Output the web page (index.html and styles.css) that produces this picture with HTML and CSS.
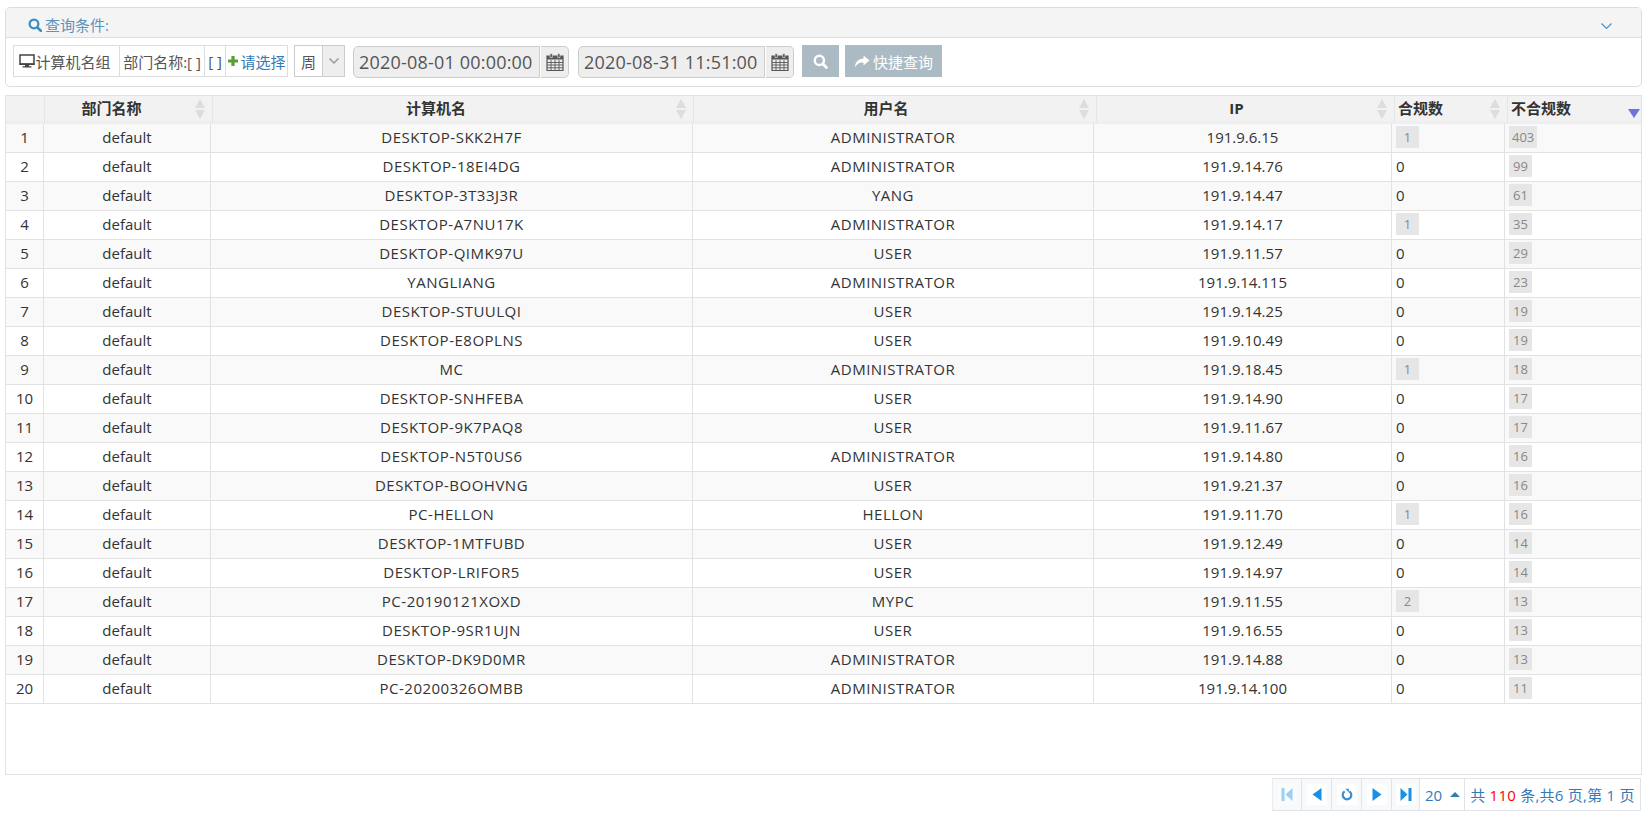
FILE: index.html
```html
<!DOCTYPE html>
<html lang="zh-CN">
<head>
<meta charset="utf-8">
<title>查询</title>
<link rel="stylesheet" href="styles.css">
</head>
<body>
<section class="panel">
  <header class="panel-head">
    <span class="panel-title">
      <svg class="i-search" viewBox="0 0 16 16"><circle cx="6.800" cy="6.800" r="5" fill="none" stroke="currentColor" stroke-width="2.600"/><path d="M10.400 10.400 14.600 14.600" stroke="currentColor" stroke-width="3" stroke-linecap="round"/></svg>查询条件:
    </span>
    <svg class="i-chev" viewBox="0 0 12 8"><path d="M1 1.500 6 6.500 11 1.500" fill="none" stroke="currentColor" stroke-width="1.200"/></svg>
  </header>
  <div class="toolbar">
    <div class="btn-group">
      <span class="seg seg-a"><svg class="i-monitor" viewBox="0 0 16 14"><path d="M1 1h14v9H1z" fill="none" stroke="#444" stroke-width="1.500"/><path d="M.5 9.500h15V11H.5zM6 11h4v1.200H6zM3.500 12.200h9V13.500h-9z" fill="#444"/></svg>计算机名组</span>
      <span class="seg seg-b">部门名称:[ ]</span>
      <span class="seg seg-c">[ ]</span>
      <span class="seg seg-d"><svg class="i-plus" viewBox="0 0 12 12"><path d="M4.400 1h3.200v3.400H11v3.200H7.600V11H4.400V7.600H1V4.400h3.400z" fill="#5a9e34"/></svg>请选择</span>
    </div>
    <div class="select">
      <span class="select-val">周</span>
      <span class="select-arrow"><svg viewBox="0 0 12 8"><path d="M1.500 1.500 6 6 10.500 1.500" fill="none" stroke="#999" stroke-width="1.500"/></svg></span>
    </div>
    <div class="date">
      <span class="date-input">2020-08-01 00:00:00</span>
      <span class="date-addon"><svg class="i-cal" viewBox="0 0 18 18"><use href="#cal"/></svg></span>
    </div>
    <div class="date">
      <span class="date-input">2020-08-31 11:51:00</span>
      <span class="date-addon"><svg class="i-cal" viewBox="0 0 18 18"><use href="#cal"/></svg></span>
    </div>
    <button class="btn btn-search"><svg class="i-search-w" viewBox="0 0 16 16"><circle cx="6.800" cy="6.800" r="4.900" fill="none" stroke="#fff" stroke-width="2.600"/><path d="M10.400 10.400 14.300 14.300" stroke="#fff" stroke-width="3" stroke-linecap="round"/></svg></button>
    <button class="btn btn-quick"><svg class="i-share" viewBox="0 0 16 13"><path d="M9.500 .5 15.500 5.500 9.500 10.500V7.500C5.500 7.500 3 8.500 1 12.500 1 7 4.500 3.700 9.500 3.500z" fill="#fff"/></svg>快捷查询</button>
  </div>
</section>

<svg class="defs" aria-hidden="true"><defs><g id="cal"><path d="M1 3h16v14.500H1z" fill="none" stroke="#555" stroke-width="1.200"/><path d="M1 3h16v3.500H1z" fill="#555"/><path d="M4 .8h2.400v3.700H4zM11.600 .8H14v3.700h-2.400z" fill="#555" stroke="#eee" stroke-width=".6"/><path d="M1 9.500h16M1 12h16M1 14.800h16M5 7v10M9 7v10M13 7v10" stroke="#555" stroke-width=".9"/></g></defs></svg>

<section class="grid">
  <table class="thead">
    <colgroup><col class="h0"><col class="h1"><col class="h2"><col class="h3"><col class="h4"><col class="h5"><col class="h6"></colgroup>
    <tr>
      <th></th>
      <th class="sortable pad-l"><span>部门名称</span><i class="sort"></i></th>
      <th class="sortable pad-l"><span>计算机名</span><i class="sort"></i></th>
      <th class="sortable pad-m"><span>用户名</span><i class="sort"></i></th>
      <th class="sortable pad-m"><span>IP</span><i class="sort"></i></th>
      <th class="sortable left"><span>合规数</span><i class="sort"></i></th>
      <th class="sortable left"><span>不合规数</span><i class="sort-down"></i></th>
    </tr>
  </table>
  <table class="tbody">
    <colgroup><col class="b0"><col class="b1"><col class="b2"><col class="b3"><col class="b4"><col class="b5"><col class="b6"></colgroup>
    <tr><td>1</td><td>default</td><td>DESKTOP-SKK2H7F</td><td>ADMINISTRATOR</td><td>191.9.6.15</td><td class="left"><b class="badge">1</b></td><td class="left"><b class="badge">403</b></td></tr>
    <tr><td>2</td><td>default</td><td>DESKTOP-18EI4DG</td><td>ADMINISTRATOR</td><td>191.9.14.76</td><td class="left">0</td><td class="left"><b class="badge">99</b></td></tr>
    <tr><td>3</td><td>default</td><td>DESKTOP-3T33J3R</td><td>YANG</td><td>191.9.14.47</td><td class="left">0</td><td class="left"><b class="badge">61</b></td></tr>
    <tr><td>4</td><td>default</td><td>DESKTOP-A7NU17K</td><td>ADMINISTRATOR</td><td>191.9.14.17</td><td class="left"><b class="badge">1</b></td><td class="left"><b class="badge">35</b></td></tr>
    <tr><td>5</td><td>default</td><td>DESKTOP-QIMK97U</td><td>USER</td><td>191.9.11.57</td><td class="left">0</td><td class="left"><b class="badge">29</b></td></tr>
    <tr><td>6</td><td>default</td><td>YANGLIANG</td><td>ADMINISTRATOR</td><td>191.9.14.115</td><td class="left">0</td><td class="left"><b class="badge">23</b></td></tr>
    <tr><td>7</td><td>default</td><td>DESKTOP-STUULQI</td><td>USER</td><td>191.9.14.25</td><td class="left">0</td><td class="left"><b class="badge">19</b></td></tr>
    <tr><td>8</td><td>default</td><td>DESKTOP-E8OPLNS</td><td>USER</td><td>191.9.10.49</td><td class="left">0</td><td class="left"><b class="badge">19</b></td></tr>
    <tr><td>9</td><td>default</td><td>MC</td><td>ADMINISTRATOR</td><td>191.9.18.45</td><td class="left"><b class="badge">1</b></td><td class="left"><b class="badge">18</b></td></tr>
    <tr><td>10</td><td>default</td><td>DESKTOP-SNHFEBA</td><td>USER</td><td>191.9.14.90</td><td class="left">0</td><td class="left"><b class="badge">17</b></td></tr>
    <tr><td>11</td><td>default</td><td>DESKTOP-9K7PAQ8</td><td>USER</td><td>191.9.11.67</td><td class="left">0</td><td class="left"><b class="badge">17</b></td></tr>
    <tr><td>12</td><td>default</td><td>DESKTOP-N5T0US6</td><td>ADMINISTRATOR</td><td>191.9.14.80</td><td class="left">0</td><td class="left"><b class="badge">16</b></td></tr>
    <tr><td>13</td><td>default</td><td>DESKTOP-BOOHVNG</td><td>USER</td><td>191.9.21.37</td><td class="left">0</td><td class="left"><b class="badge">16</b></td></tr>
    <tr><td>14</td><td>default</td><td>PC-HELLON</td><td>HELLON</td><td>191.9.11.70</td><td class="left"><b class="badge">1</b></td><td class="left"><b class="badge">16</b></td></tr>
    <tr><td>15</td><td>default</td><td>DESKTOP-1MTFUBD</td><td>USER</td><td>191.9.12.49</td><td class="left">0</td><td class="left"><b class="badge">14</b></td></tr>
    <tr><td>16</td><td>default</td><td>DESKTOP-LRIFOR5</td><td>USER</td><td>191.9.14.97</td><td class="left">0</td><td class="left"><b class="badge">14</b></td></tr>
    <tr><td>17</td><td>default</td><td>PC-20190121XOXD</td><td>MYPC</td><td>191.9.11.55</td><td class="left"><b class="badge">2</b></td><td class="left"><b class="badge">13</b></td></tr>
    <tr><td>18</td><td>default</td><td>DESKTOP-9SR1UJN</td><td>USER</td><td>191.9.16.55</td><td class="left">0</td><td class="left"><b class="badge">13</b></td></tr>
    <tr><td>19</td><td>default</td><td>DESKTOP-DK9D0MR</td><td>ADMINISTRATOR</td><td>191.9.14.88</td><td class="left">0</td><td class="left"><b class="badge">13</b></td></tr>
    <tr><td>20</td><td>default</td><td>PC-20200326OMBB</td><td>ADMINISTRATOR</td><td>191.9.14.100</td><td class="left">0</td><td class="left"><b class="badge">11</b></td></tr>
  </table>
</section>

<nav class="pager">
  <span class="pg pg-btn disabled"><svg viewBox="0 0 12 14"><path d="M.5 .5h3v13h-3zM11.500 .5v13L4.500 7z" fill="#1b8fe6"/></svg></span>
  <span class="pg pg-btn"><svg viewBox="0 0 12 14"><path d="M10.500 .5v13L1.500 7z" fill="#1b8fe6"/></svg></span>
  <span class="pg pg-btn"><svg viewBox="0 0 14 14"><path d="M4.300 3.400A5 5 0 1 0 9.700 3.400" fill="none" stroke="#3d8fd1" stroke-width="2.600"/><path d="M5 .2h4.200v4.600z" fill="#3d8fd1"/></svg></span>
  <span class="pg pg-btn"><svg viewBox="0 0 12 14"><path d="M1.500 .5v13L10.500 7z" fill="#1b8fe6"/></svg></span>
  <span class="pg pg-btn pg-last"><svg viewBox="0 0 12 14"><path d="M11.500 .5h-3v13h3zM.5 .5v13L7.500 7z" fill="#1b8fe6"/></svg></span>
  <span class="pg pg-size">20<i class="caret"></i></span>
  <span class="pg pg-info">共 <em>110</em> 条,共6 页,第 1 页</span>
</nav>
</body>
</html>
```
FILE: styles.css
```css
* { box-sizing: border-box; }
html, body { margin: 0; padding: 0; background: #fff; }
body {
  width: 1651px;
  height: 823px;
  overflow: hidden;
  padding: 7px 9px 0 5px;
  font-family: "Open Sans", "Noto Sans CJK SC", sans-serif;
  font-size: 15px;
  color: #333;
}
.defs { width: 0; height: 0; position: absolute; }

.panel {
  height: 80px;
  border: 1px solid #ddd;
  border-radius: 5px;
  overflow: hidden;
}
.panel-head {
  height: 30px;
  background: #f4f4f4;
  border-bottom: 1px solid #ddd;
  display: flex;
  align-items: center;
  justify-content: space-between;
  padding: 4px 28px 0 22px;
}
.panel-title { display: flex; align-items: center; font-size: 15px; color: #5b93bb; }
.i-search { width: 14px; height: 14px; margin-right: 3px; color: #3f8fc0; }
.i-chev { width: 13px; height: 8px; margin-top: 3px; color: #4a90c8; }

.toolbar {
  display: flex;
  align-items: flex-start;
  padding: 7px 0 0 7px;
}
.btn-group {
  display: flex;
  height: 32px;
  border: 1px solid #ddd;
  background: #fff;
}
.seg {
  display: flex;
  align-items: center;
  justify-content: center;
  border-right: 1px solid #ddd;
  white-space: nowrap;
  color: #555;
}
.seg:last-child { border-right: 0; }
.seg-a { width: 106px; padding-right: 3px; }
.seg-b { width: 85px; }
.seg-c { width: 21px; }
.seg-d { width: 61px; color: #337ab7; }
.i-monitor { width: 16px; height: 14px; }
.i-plus { width: 12px; height: 12px; margin-right: 1px; }

.select {
  display: flex;
  height: 32px;
  width: 51px;
  margin-left: 6px;
  border: 1px solid #ccc;
}
.select-val { width: 28px; display: flex; align-items: center; justify-content: center; border-right: 1px solid #ccc; color: #555; }
.select-arrow { flex: 1; background: #eee; display: flex; align-items: center; justify-content: center; }
.select-arrow svg { width: 12px; height: 8px; }

.date { display: flex; margin: 1px 0 0 8px; height: 32px; }
.date + .date { margin-left: 9px; }
.date-input {
  width: 187px;
  height: 32px;
  padding-left: 5px;
  border: 1px solid #ccc;
  border-radius: 5px 0 0 5px;
  background: #eee;
  font-size: 18px;
  letter-spacing: .2px;
  color: #555;
  display: flex;
  align-items: center;
}
.date-addon {
  width: 28px;
  height: 32px;
  margin-left: 1px;
  border: 1px solid #ccc;
  border-left: 0;
  border-radius: 0 5px 5px 0;
  background: #eee;
  display: flex;
  align-items: center;
  justify-content: center;
}
.i-cal { width: 18px; height: 18px; }

.btn {
  height: 32px;
  border: 0;
  padding: 0;
  background: #abbac3;
  color: #fff;
  font: inherit;
  display: flex;
  align-items: center;
  justify-content: center;
}
.btn-search { width: 37px; margin-left: 8px; }
.btn-quick { width: 97px; margin-left: 6px; }
.i-search-w { width: 15px; height: 15px; }
.i-share { width: 16px; height: 13px; margin-right: 3px; }

.grid {
  margin-top: 8px;
  height: 680px;
  border: 1px solid #e2e2e2;
  overflow: hidden;
}
table { border-collapse: separate; border-spacing: 0; table-layout: fixed; }
.thead { width: 1636px; height: 28px; background: #f2f2f2; }
.thead th {
  height: 28px;
  padding: 0;
  font-size: 15px;
  font-weight: 700;
  color: #333;
  text-align: center;
  border-right: 1px solid #e6e6e6;
  border-bottom: 3px solid #eee;
  position: relative;
}
.thead th span { position: relative; top: -1px; }
.thead th.pad-l { padding-right: 34px; }
.thead th.pad-m { padding-right: 18px; }
.thead th.left { text-align: left; padding-left: 3px; }
.thead th:last-child { border-right: 0; }
.h0 { width: 39px; } .h1 { width: 168px; } .h2 { width: 481px; } .h3 { width: 403px; }
.h4 { width: 298px; } .h5 { width: 113px; } .h6 { width: 134px; }
.sort { position: absolute; right: 7px; top: 3px; width: 10px; height: 20px; }
.sort::before, .sort::after {
  content: "";
  position: absolute;
  left: 0;
  border-left: 5px solid transparent;
  border-right: 5px solid transparent;
}
.sort::before { top: 0; border-bottom: 9px solid #ddd; }
.sort::after { bottom: 0; border-top: 9px solid #ddd; }
.sort-down {
  position: absolute;
  right: 2px;
  bottom: 3px;
  border-left: 6px solid transparent;
  border-right: 6px solid transparent;
  border-top: 9px solid #6f73e0;
}
.tbody { width: 1635px; }
.tbody td {
  height: 29px;
  padding: 0 0 2px;
  text-align: center;
  border-right: 1px solid #e2e2e2;
  border-bottom: 1px solid #e2e2e2;
  color: #333;
  line-height: 20px;
}
.tbody td:nth-child(3), .tbody td:nth-child(4) { letter-spacing: .5px; }
.tbody td.left { text-align: left; padding-left: 4px; }
.tbody td:last-child { border-right: 0; }
.tbody tr:nth-child(odd) td { background: #f9f9f9; }
.b0 { width: 38px; } .b1 { width: 167px; } .b2 { width: 482px; } .b3 { width: 401px; }
.b4 { width: 298px; } .b5 { width: 113px; } .b6 { width: 136px; }
.badge {
  display: inline-block;
  min-width: 23px;
  height: 22px;
  line-height: 22px;
  padding: 0 3px;
  font-size: 13px;
  font-weight: 400;
  text-align: center;
  background: #e6e6e6;
  color: #888;
  vertical-align: top;
}

.pager {
  display: flex;
  justify-content: flex-end;
  margin-top: 3px;
  margin-right: 1px;
  height: 33px;
}
.pg {
  height: 33px;
  border: 1px solid #e0e4e8;
  border-left: 0;
  display: flex;
  align-items: center;
  justify-content: center;
  color: #337ab7;
}
.pg:first-child { border-left: 1px solid #e9edf0; }
.pg-btn { width: 30px; background: #f7f9fb; }
.pg-last { width: 28px; }
.pg-btn svg { width: 20px; height: 21px; padding: 3px 4px; background: #fff; }
.disabled svg { opacity: .4; }
.pg-size { width: 45px; justify-content: flex-start; padding-left: 5px; }
.caret {
  margin-left: 8px;
  border-left: 5px solid transparent;
  border-right: 5px solid transparent;
  border-bottom: 5px solid #337ab7;
}
.pg-info { width: 176px; white-space: pre; letter-spacing: .25px; }
.pg-info em { font-style: normal; color: #f00; }
```
